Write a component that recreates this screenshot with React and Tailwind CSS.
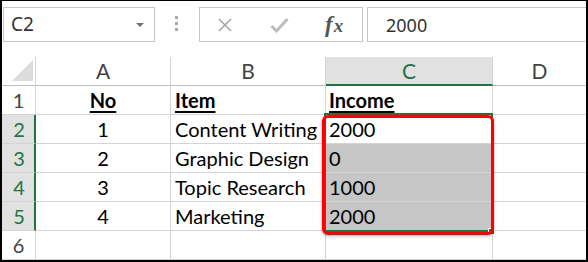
import React from 'react';

const ROWS = [
  { n: 1, a: 'No', b: 'Item', c: 'Income', head: true },
  { n: 2, a: '1', b: 'Content Writing', c: '2000', sel: true, active: true },
  { n: 3, a: '2', b: 'Graphic Design', c: '0', sel: true },
  { n: 4, a: '3', b: 'Topic Research', c: '1000', sel: true },
  { n: 5, a: '4', b: 'Marketing', c: '2000', sel: true },
  { n: 6, a: '', b: '', c: '' },
];

const cell = 'h-full box-border border-r border-b border-[#d4d4d4] flex items-center';

function Toolbar() {
  return (
    <div className="h-[56px] flex items-start pt-[6px] font-['Noto_Sans',sans-serif] text-[#333]">
      {/* name box */}
      <div className="ml-px w-[152px] h-[35px] border border-[#c6c6c6] flex items-center justify-between pl-[7px] pr-[9px]">
        <span className="text-[19px] leading-none">C2</span>
        <svg width="10" height="6" viewBox="0 0 10 6">
          <path d="M1 1h8L5 5z" fill="#707070" />
        </svg>
      </div>
      {/* dots */}
      <div className="ml-[20px] mt-[9px] flex flex-col gap-[3px]">
        <div className="w-[3px] h-[3px] bg-[#a8a8a8]" />
        <div className="w-[3px] h-[3px] bg-[#a8a8a8]" />
        <div className="w-[3px] h-[3px] bg-[#a8a8a8]" />
      </div>
      {/* buttons */}
      <div className="ml-[21px] w-[164px] h-[35px] border border-[#c6c6c6] flex items-center">
        <svg className="ml-[17px]" width="16" height="16" viewBox="0 0 16 16">
          <path d="M2 2l12 12M14 2L2 14" stroke="#a6a6a6" strokeWidth="1.6" />
        </svg>
        <svg className="ml-[37px]" width="19" height="16" viewBox="0 0 19 16">
          <path d="M1.5 9l5 5L17.5 2" stroke="#bdbdbd" strokeWidth="3" fill="none" />
        </svg>
        <span className="ml-[36px] font-['Liberation_Serif',serif] italic font-semibold text-[23px] text-[#555] leading-none tracking-[1px]">
          f<span className="text-[19px]">x</span>
        </span>
      </div>
      {/* formula input */}
      <div className="ml-[4px] flex-1 h-[35px] border-t border-b border-l border-[#c6c6c6] flex items-center pl-[18px]">
        <span className="text-[18px] leading-none">2000</span>
      </div>
    </div>
  );
}

function HeaderRow() {
  return (
    <div className="flex h-[29px] text-[21px] text-[#444]">
      <div className={`${cell} w-[34px] border-b-[#bdbdbd] relative`}>
        <svg className="absolute left-[10px] top-[3px]" width="21" height="21" viewBox="0 0 21 21">
          <path d="M21 0V21H0z" fill="#dcdcdc" />
        </svg>
      </div>
      <div className={`${cell} w-[135px] justify-center border-b-[#bdbdbd]`}>A</div>
      <div className={`${cell} w-[155px] justify-center border-b-[#bdbdbd]`}>B</div>
      <div className="h-full box-border w-[167px] flex items-center justify-center bg-[#e1e1e1] border-r border-[#d4d4d4] border-b-2 border-b-[#217346] text-[#217346]">
        C
      </div>
      <div className={`${cell} flex-1 border-r-0 justify-center border-b-[#bdbdbd]`}>D</div>
    </div>
  );
}

function Row({ r }) {
  const hd = r.head ? 'font-bold underline underline-offset-[3px] decoration-2' : '';
  return (
    <div className="flex h-[29px] text-[20px] text-black">
      <div
        className={
          r.sel
            ? 'h-full box-border w-[34px] flex items-center justify-center bg-[#e1e1e1] border-b border-[#d4d4d4] border-r-2 border-r-[#217346] text-[#217346] pl-[2px]'
            : `${cell} w-[34px] justify-center text-[#444]`
        }
      >
        {r.n}
      </div>
      <div className={`${cell} w-[135px] justify-center`}>
        <span className={hd}>{r.a}</span>
      </div>
      <div className={`${cell} w-[155px] pl-[4px]`}>
        <span className={`${hd} whitespace-nowrap`}>{r.b}</span>
      </div>
      <div className={`${cell} w-[167px] pl-[3px] ${r.sel && !r.active ? 'bg-[#c6c6c6] border-[#a9a9a9]' : ''}`}>
        <span className={hd}>{r.c}</span>
      </div>
      <div className={`${cell} flex-1 border-r-0`} />
    </div>
  );
}

export default function App() {
  return (
    <div className="w-[588px] h-[262px] box-border overflow-hidden bg-white border-t border-l-2 border-r-2 border-b-2 border-black">
      <Toolbar />
      <div className="relative font-['Lato',sans-serif]">
        <HeaderRow />
        {ROWS.map((r) => (
          <Row key={r.n} r={r} />
        ))}
        {/* selection border */}
        <div className="absolute left-[322px] top-[56px] w-[169px] h-[119px] border-2 border-[#217346]" />
        <div className="absolute left-[486px] top-[171px] w-[7px] h-[7px] bg-[#217346] border border-white" />
        {/* red highlight */}
        <div className="absolute left-[320px] top-[58px] w-[172px] h-[120px] border-[3px] border-[#ff0000] rounded-[6px] shadow-[0_1px_3px_rgba(0,0,0,0.35)]" />
      </div>
    </div>
  );
}
